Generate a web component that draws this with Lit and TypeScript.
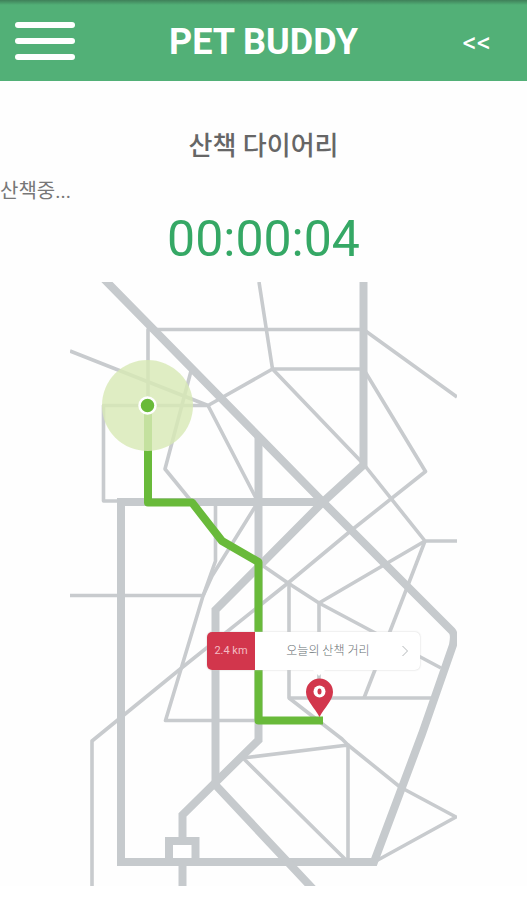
import { LitElement, html, css, svg } from "lit";
import { customElement, property, state } from "lit/decorators.js";

const MAIN_ROADS = [
  "M103 278L323 502L452 631Q455 634 453 645L422 734L374 862H121V502H323",
  "M363.5 282V465L323 502L215.5 610V785L314 890",
  "M258.5 436V740L182.5 815V840M182.5 862V886",
];

const SIDE_STREETS = [
  "M148 406V329.5H363.5L457 397",
  "M259 282L272.5 369H363.5L425.5 471.5L353 529L288 583L181.5 668L92 741V886",
  "M272.5 369L363.5 464L425 541H457",
  "M272.5 369L208 405.5L70 351",
  "M208 405.5H103.5V501H121",
  "M208 405.5L258 502L212 576L203 596",
  "M191 371L165 469L192 502",
  "M215.5 502V561L203 596L165.5 720.5H258",
  "M70 595.5H203",
  "M259 563L288 583L319 603L441 668",
  "M289 583V698H431",
  "M289 698L342 739L348 745L400 787L456 817L376 861",
  "M348 860V745L243 758L347 861",
  "M425 541L319 603V690",
  "M425 541L403 598L364 698",
];

@customElement("street-map")
class StreetMap extends LitElement {
  static styles = css`
    :host {
      display: block;
    }
    .map {
      display: block;
      width: 100%;
      height: auto;
    }
    .main {
      fill: none;
      stroke: #c6cacd;
      stroke-width: 8;
    }
    .side {
      fill: none;
      stroke: #c8cbce;
      stroke-width: 3.6;
      stroke-linejoin: round;
    }
    .route {
      fill: none;
      stroke: #69ba3a;
      stroke-width: 8;
      stroke-linejoin: round;
    }
    .junction {
      fill: #fff;
      stroke: #c6cacd;
      stroke-width: 8;
    }
    .halo {
      fill: #d8e9b6;
      fill-opacity: 0.82;
    }
    .dot {
      fill: #69ba3a;
      stroke: #fff;
      stroke-width: 2.5;
    }
    .pin {
      fill: #d2364c;
    }
    .ring {
      fill: #fff;
    }
  `;

  render() {
    return html`
      <svg class="map" viewBox="70 282 387 604" role="img" aria-label="산책 경로">
        ${SIDE_STREETS.map((d) => svg`<path class="side" d=${d} />`)}
        ${MAIN_ROADS.map((d) => svg`<path class="main" d=${d} />`)}
        <rect class="junction" x="169" y="841" width="26.5" height="21" />
        <path class="route" d="M148 406V502.5H192L222 541L258.5 562V720.5H323" />
        <circle class="halo" cx="147.5" cy="405.5" r="45.5" />
        <circle class="dot" cx="147.5" cy="405.5" r="8" />
        <path
          class="pin"
          d="M319.5 717C315 708 306 700.5 306 692A13.5 13.5 0 0 1 333 692C333 700.5 324 708 319.5 717Z"
        />
        <circle class="ring" cx="319.5" cy="691.5" r="6" />
        <ellipse class="pin" cx="319.5" cy="691.5" rx="2" ry="3" />
      </svg>
    `;
  }
}

@customElement("app-root")
class AppRoot extends LitElement {
  static styles = css`
    :host {
      display: block;
      background: #fefefe;
      font-family: Roboto, "Noto Sans CJK KR", sans-serif;
      color: #666;
    }
    button {
      border: 0;
      padding: 0;
      background: none;
      font: inherit;
      color: inherit;
      cursor: pointer;
    }
    .bar {
      display: grid;
      grid-template-columns: 1fr auto 1fr;
      align-items: center;
      height: 81px;
      box-sizing: border-box;
      padding: 0 15px;
      background: linear-gradient(#3f8059, #52b077 5px);
      color: #fff;
    }
    .menu {
      justify-self: start;
      display: flex;
      flex-direction: column;
      gap: 10px;
      width: 60px;
    }
    .line {
      height: 6px;
      border-radius: 3px;
      background: #fff;
    }
    .brand {
      margin: 0;
      padding-top: 2px;
      font-size: 36px;
      line-height: 44px;
      font-weight: 700;
    }
    .back {
      justify-self: end;
      padding: 4px 21px 0;
      font-size: 28px;
      line-height: 32px;
    }
    .title {
      margin: 44px 0 0;
      font-size: 26px;
      line-height: 42px;
      font-weight: 500;
      text-align: center;
    }
    .status {
      margin: 9px 0 0;
      font-size: 20px;
      line-height: 30px;
      color: #777;
    }
    .timer {
      margin: 3px 0 0;
      font-size: 50px;
      line-height: 60px;
      font-weight: 400;
      text-align: center;
      color: #35a865;
    }
    .walk {
      position: relative;
      margin: 13px 70px;
    }
    .callout {
      position: absolute;
      left: 35.4%;
      top: 57.9%;
      width: 55%;
      height: 38px;
      display: flex;
      align-items: center;
      border-radius: 5px;
      background: #fff;
      box-shadow: 0 0 2px #ccc;
      font-size: 12px;
      line-height: 18px;
    }
    .distance {
      align-self: stretch;
      display: grid;
      place-items: center;
      width: 48px;
      border-radius: 5px 0 0 5px;
      background: #d2364c;
      font-size: 11px;
      color: #f3bcc3;
    }
    .label {
      flex: 1;
      text-align: center;
      font-weight: 300;
      color: #666f73;
    }
    .chevron {
      width: 8px;
      height: 12px;
      margin-right: 11px;
      fill: none;
      stroke: #b4b8ba;
    }
    .tip {
      position: absolute;
      left: 50%;
      top: 100%;
      width: 12px;
      height: 6px;
      fill: #fff;
    }
  `;

  @property({ type: Number }) elapsed = 4;
  @state() private distance = "2.4 km";

  private get clock() {
    const parts = [this.elapsed / 3600, (this.elapsed / 60) % 60, this.elapsed % 60];
    return parts.map((n) => String(Math.floor(n)).padStart(2, "0")).join(":");
  }

  render() {
    return html`
      <header class="bar">
        <button class="menu" aria-label="메뉴">
          <span class="line"></span><span class="line"></span><span class="line"></span>
        </button>
        <h1 class="brand">PET BUDDY</h1>
        <button class="back">&lt;&lt;</button>
      </header>
      <main>
        <h2 class="title">산책 다이어리</h2>
        <p class="status">산책중...</p>
        <p class="timer" role="timer">${this.clock}</p>
        <section class="walk">
          <street-map></street-map>
          <button class="callout">
            <span class="distance">${this.distance}</span>
            <span class="label">오늘의 산책 거리</span>
            <svg class="chevron" viewBox="0 0 8 12"><path d="M1.5 1L6.5 6L1.5 11" /></svg>
            <svg class="tip" viewBox="0 0 12 6"><path d="M0 0H12L6 6Z" /></svg>
          </button>
        </section>
      </main>
    `;
  }
}
